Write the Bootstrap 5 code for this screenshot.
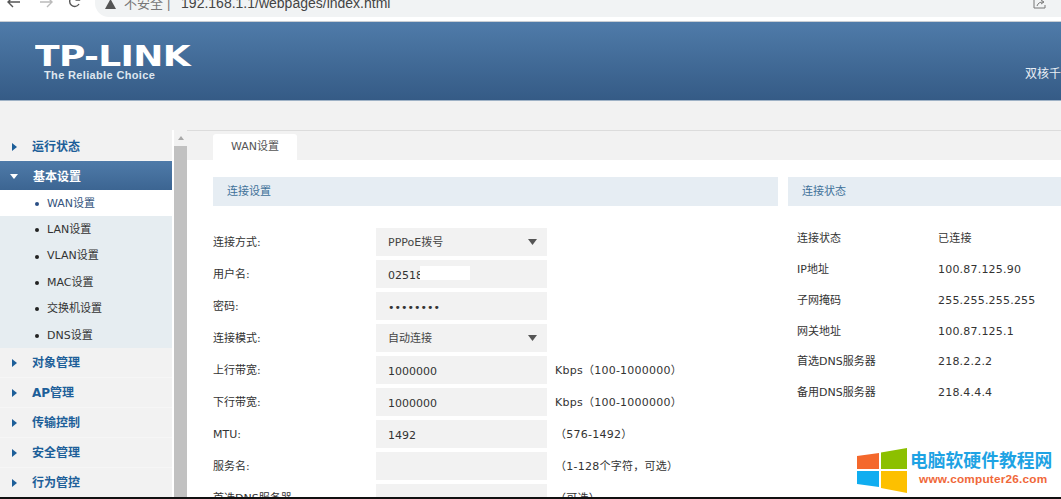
<!DOCTYPE html>
<html lang="zh-CN">

<head>
    <meta charset="UTF-8">
    <meta name="viewport" content="width=device-width, initial-scale=1.0">
    <title>TP-LINK WAN设置</title>
    <link href="https://cdn.jsdelivr.net/npm/bootstrap@5.3.2/dist/css/bootstrap.min.css" rel="stylesheet">

    <style>
        html, body { height: 100%; }

        body {
            overflow: hidden;
            font-family: "DejaVu Sans", "Noto Sans CJK SC", sans-serif;
            font-size: 11px;
            color: #333;
            background: #fff;
        }

        .page-wrap { height: 499px; overflow: hidden; position: relative; }

        /* browser chrome, cut off at the top of the shot */
        .chrome-bar { height: 22px; flex: none; overflow: hidden; background: #fff; border-bottom: 1px solid #c9ced3; }
        .chrome-btn { width: 30px; height: 12px; margin-top: -4px; flex: none; }
        .addr-pill {
            width: 966px; height: 17px; margin-left: 5px; padding-left: 10px;
            background: #f1f3f4; border-radius: 0 0 0 14px; overflow: hidden;
            font-family: "Liberation Sans", "Noto Sans CJK SC", sans-serif; font-size: 14px; color: #444;
            line-height: 7px; white-space: nowrap;
        }
        .addr-pill .muted-txt { color: #777; font-size: 13px; }
        .addr-url { padding-left: 3px; }

        /* header */
        .top-head {
            height: 79px; flex: none; overflow: hidden;
            background: linear-gradient(#4f7ba9, #355b86);
            border-bottom: 1px solid #9fb2c6;
            color: #fff; position: relative;
        }
        .logo-box { padding: 22px 0 0 35px; width: 1025px; flex: none; }
        .logo-main {
            display: block; font-family: "DejaVu Sans", sans-serif; font-weight: 700; font-size: 29px;
            line-height: 24px; transform: scaleX(1.24); transform-origin: left; white-space: nowrap; letter-spacing: -.5px;
        }
        .logo-sub { display: block; font-family: "Liberation Sans", sans-serif; font-weight: 700; font-size: 11px; padding-left: 9px; line-height: 14px; letter-spacing: .35px; color: #dfe7ef; }
        .head-right { padding-top: 43px; font-size: 12px; white-space: nowrap; color: #e8eef4; }

        .gray-band { height: 29px; flex: none; background: #f2f2f2; }

        /* side menu */
        .side-menu { width: 172px; flex: none; background: #f2f2f2; border-top: 1px solid #f2f2f2; }
        .menu-top {
            height: 30px; padding: 2px 0 0 12px; gap: 15px; background: #f2f2f2; border-bottom: 1px solid #f6f6f6;
            color: #1d5f99; font-weight: 700; font-size: 12px; text-decoration: none;
        }
        .menu-top.is-open { height: 29px; padding-left: 10px; gap: 13px; color: #fff; background: linear-gradient(#4f7ba9, #3c6592); border: 0; }
        .menu-top.is-open .tri-down { margin-right: 2px; }
        .menu-sub { background: #e6edf1; }
        .menu-sub a { height: 26.4px; padding: 2px 0 0 35px; color: #333; text-decoration: none; gap: 8px; }
        .menu-sub a.is-current { height: 26px; background: #fff; color: #33537c; }
        .menu-dot { width: 4px; height: 4px; border-radius: 50%; background: #222; flex: none; }
        .is-current .menu-dot { background: #2a4f85; }
        .tri-right { width: 0; height: 0; border-style: solid; border-width: 4.5px 0 4.5px 5px; border-color: transparent transparent transparent #1d5f99; flex: none; }
        .tri-down { width: 0; height: 0; border-style: solid; border-width: 5px 4.5px 0 4.5px; border-color: #fff transparent transparent transparent; flex: none; }

        .scroll-rail { width: 13px; margin-left: 2px; flex: none; background: #c1c1c1; }
        .scroll-cap { height: 16px; background: #f2f2f2; padding-top: 6px; }
        .scroll-up { width: 0; height: 0; margin: 0 auto; border-style: solid; border-width: 0 3.5px 4px 3.5px; border-color: transparent transparent #a8a8a8 transparent; }

        /* content */
        .main-pane { min-width: 0; overflow: hidden; border-top: 1px solid #dcdcdc; }
        .tab-strip { height: 29px; background: #f2f2f2; padding: 3px 0 0 26px; }
        .tab-item { width: 84px; height: 26px; padding-top: 1px; background: #fff; border-radius: 3px 3px 0 0; color: #555; }
        .pane-body { padding: 17px 0 0 26px; gap: 10px; }
        .conn-col { width: 565px; flex: none; }
        .status-col { width: 300px; flex: none; }
        .sec-title { height: 29px; padding: 2px 0 0 14px; background: #e6edf3; color: #3f7199; }

        .field-list { padding-top: 22px; }
        .field-row { height: 28px; margin-bottom: 4px; }
        .field-label { width: 163px; flex: none; padding-top: 2px; }
        .field-ctl { width: 171px; flex: none; position: relative; }
        .field-ctl .form-control, .field-ctl .form-select {
            height: 28px; padding: 2px 12px 0; border: 0; border-radius: 0; min-height: 0;
            background-color: #f2f2f2; font-size: 11px; color: #333; box-shadow: none;
            font-family: "DejaVu Sans", "Noto Sans CJK SC", sans-serif;
        }
        .field-ctl .form-select {
            color: #444;
            background-image: url("data:image/svg+xml,%3Csvg xmlns='http://www.w3.org/2000/svg' width='9' height='6'%3E%3Cpath d='M0 0h9L4.5 6z' fill='%23555'/%3E%3C/svg%3E");
            background-size: 9px 6px; background-position: right 10px center;
        }
        .field-hint { padding: 2px 0 0 8px; white-space: nowrap; letter-spacing: .25px; }
        .name-mask { position: absolute; left: 44px; top: 6px; width: 50px; height: 14px; background: #fff; }

        .status-list { padding-top: 18px; padding-left: 9px; }
        .status-row { height: 30.8px; }
        .status-key { width: 141px; flex: none; }
        .status-val { letter-spacing: .2px; }

        /* site watermark over the page corner */
        .mark-box {
            position: absolute; right: 0; bottom: 2px; width: 214px; height: 57px; padding: 0 0 0 10px; gap: 3px;
            background: #fff;
        }
        .mark-words { margin-bottom: 2px; }
        .mark-txt { font-family: "Noto Sans CJK SC", sans-serif; font-weight: 700; font-size: 17.8px; line-height: 20px; color: #1ea3e4; white-space: nowrap; }
        .mark-url { font-family: "Liberation Sans", sans-serif; font-weight: 700; font-size: 11.8px; line-height: 14px; color: #f0683a; padding: 3px 0 0 9px; white-space: nowrap; letter-spacing: .2px; }
        .base-line { position: absolute; left: 0; right: 0; bottom: 0; height: 2px; background: #111; }
    </style>
</head>

<body>
    <div class="page-wrap d-flex flex-column">

        <!-- barra do navegador -->
        <div class="chrome-bar d-flex align-items-start">
            <svg class="chrome-btn" style="margin-left:0" viewBox="0 0 30 12"><path d="M20 6H9M13 1 8 6l5 5" fill="none" stroke="#555" stroke-width="1.4"/></svg>
            <svg class="chrome-btn" viewBox="0 0 30 12"><path d="M10 6h11M17 1l5 5-5 5" fill="none" stroke="#bbb" stroke-width="1.4"/></svg>
            <svg class="chrome-btn" viewBox="0 0 30 12"><path d="M19 8a5 5 0 1 1 0-5M19.500 0v4h-4" fill="none" stroke="#555" stroke-width="1.4"/></svg>
            <div class="addr-pill d-flex align-items-start">
                <svg width="11" height="10" viewBox="0 0 11 10" style="margin:-1px 8px 0 0;flex:none"><path d="M5.500 0 11 10H0z" fill="#555"/></svg>
                <span><span class="muted-txt">不安全</span> <span class="muted-txt">|</span><span class="addr-url">&nbsp; 192.168.1.1/webpages/index.html</span></span>
            </div>
            <svg width="14" height="10" viewBox="0 0 14 10" style="margin:0 0 0 -28px;flex:none;position:relative"><path d="M1 0v8h11V5M4 6c1-3 3-4 6-4M8 0l3 2-3 2" fill="none" stroke="#777"/></svg>
        </div>

        <!-- cabecalho -->
        <header class="top-head d-flex">
            <div class="logo-box">
                <span class="logo-main">TP-LINK</span>
                <span class="logo-sub">The Reliable Choice</span>
            </div>
            <div class="head-right">双核千兆企业VPN路由器</div>
        </header>
        <div class="gray-band"></div>

        <div class="d-flex flex-grow-1" style="min-height:0">
            <!-- menu lateral -->
            <nav class="side-menu">
                <a class="menu-top d-flex align-items-center" href="#"><span class="tri-right"></span>运行状态</a>
                <a class="menu-top is-open d-flex align-items-center" href="#"><span class="tri-down"></span>基本设置</a>
                <div class="menu-sub d-flex flex-column">
                    <a class="is-current d-flex align-items-center" href="#"><span class="menu-dot"></span>WAN设置</a>
                    <a class="d-flex align-items-center" href="#"><span class="menu-dot"></span>LAN设置</a>
                    <a class="d-flex align-items-center" href="#"><span class="menu-dot"></span>VLAN设置</a>
                    <a class="d-flex align-items-center" href="#"><span class="menu-dot"></span>MAC设置</a>
                    <a class="d-flex align-items-center" href="#"><span class="menu-dot"></span>交换机设置</a>
                    <a class="d-flex align-items-center" href="#"><span class="menu-dot"></span>DNS设置</a>
                </div>
                <a class="menu-top d-flex align-items-center" href="#"><span class="tri-right"></span>对象管理</a>
                <a class="menu-top d-flex align-items-center" href="#"><span class="tri-right"></span>AP管理</a>
                <a class="menu-top d-flex align-items-center" href="#"><span class="tri-right"></span>传输控制</a>
                <a class="menu-top d-flex align-items-center" href="#"><span class="tri-right"></span>安全管理</a>
                <a class="menu-top d-flex align-items-center" href="#"><span class="tri-right"></span>行为管控</a>
            </nav>
            <div class="scroll-rail">
                <div class="scroll-cap"><div class="scroll-up"></div></div>
            </div>

            <!-- conteudo -->
            <main class="main-pane flex-grow-1">
                <div class="tab-strip d-flex">
                    <div class="tab-item d-flex align-items-center justify-content-center">WAN设置</div>
                </div>
                <div class="pane-body d-flex">
                    <section class="conn-col">
                        <div class="sec-title d-flex align-items-center">连接设置</div>
                        <div id="campos" class="field-list"></div>
                    </section>
                    <section class="status-col">
                        <div class="sec-title d-flex align-items-center">连接状态</div>
                        <div id="estado" class="status-list"></div>
                    </section>
                </div>
            </main>
        </div>

        <!-- marca d'agua -->
        <div class="mark-box d-flex align-items-center">
            <svg width="50" height="50" viewBox="0 0 50 50" style="flex:none">
                <path d="M0 12 22 9V25H0z" fill="#f4682c"/>
                <path d="M24 8.500 50 4V25H24z" fill="#8cc000"/>
                <path d="M0 27H22V43L0 40z" fill="#10adf0"/>
                <path d="M24 27H50V49L24 44z" fill="#fdc000"/>
            </svg>
            <div class="mark-words">
                <div class="mark-txt">电脑软硬件教程网</div>
                <div class="mark-url">www.computer26.com</div>
            </div>
        </div>
        <div class="base-line"></div>
    </div>

    <script src="https://cdn.jsdelivr.net/npm/bootstrap@5.3.2/dist/js/bootstrap.bundle.min.js"></script>
    <script>
        // linhas do formulario
        const campos = [
            { rotulo: '连接方式:', tipo: 'select', valor: 'PPPoE拨号' },
            { rotulo: '用户名:', tipo: 'text', valor: '02518', mascara: true },
            { rotulo: '密码:', tipo: 'password', valor: '12345678' },
            { rotulo: '连接模式:', tipo: 'select', valor: '自动连接' },
            { rotulo: '上行带宽:', tipo: 'text', valor: '1000000', dica: 'Kbps（100-1000000）' },
            { rotulo: '下行带宽:', tipo: 'text', valor: '1000000', dica: 'Kbps（100-1000000）' },
            { rotulo: 'MTU:', tipo: 'text', valor: '1492', dica: '（576-1492）' },
            { rotulo: '服务名:', tipo: 'text', valor: '', dica: '（1-128个字符，可选）' },
            { rotulo: '首选DNS服务器:', tipo: 'text', valor: '', dica: '（可选）' },
        ];

        const estado = [
            ['连接状态', '已连接'],
            ['IP地址', '100.87.125.90'],
            ['子网掩码', '255.255.255.255'],
            ['网关地址', '100.87.125.1'],
            ['首选DNS服务器', '218.2.2.2'],
            ['备用DNS服务器', '218.4.4.4'],
        ];

        document.getElementById('campos').innerHTML = campos.map((c) => {
            const controle = c.tipo === 'select'
                ? `<select class="form-select"><option>${c.valor}</option></select>`
                : `<input class="form-control" type="${c.tipo}" value="${c.valor}">`;
            return `
            <div class="field-row d-flex align-items-center">
                <label class="field-label">${c.rotulo}</label>
                <div class="field-ctl">${controle}${c.mascara ? '<span class="name-mask"></span>' : ''}</div>
                <span class="field-hint">${c.dica || ''}</span>
            </div>`;
        }).join('');

        document.getElementById('estado').innerHTML = estado.map((e) => `
            <div class="status-row d-flex align-items-center">
                <span class="status-key">${e[0]}</span>
                <span class="status-val">${e[1]}</span>
            </div>`).join('');
    </script>
</body>

</html>
